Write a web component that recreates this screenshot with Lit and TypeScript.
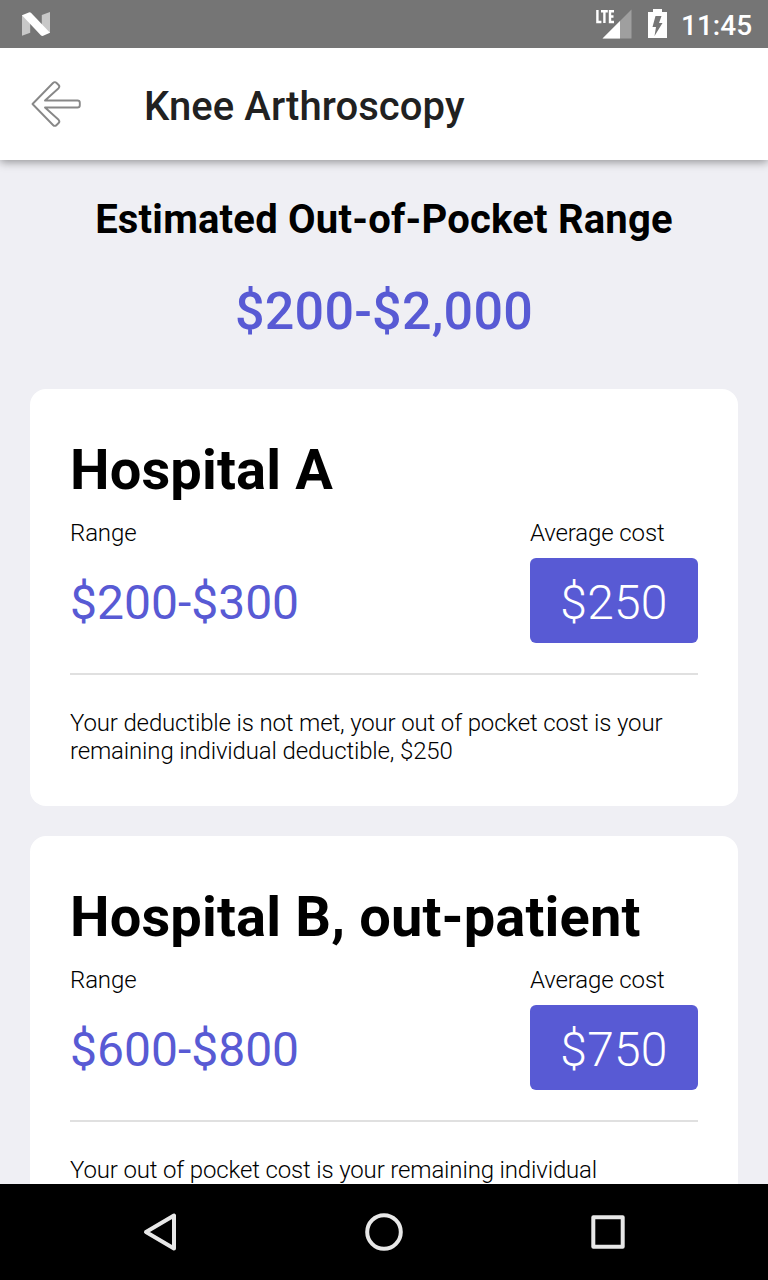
import { LitElement, html, css } from "lit";
import { customElement, property } from "lit/decorators.js";

interface Estimate {
  name: string;
  range: string;
  average: string;
  note: string;
}

const estimates: Estimate[] = [
  {
    name: "Hospital A",
    range: "$200-$300",
    average: "$250",
    note: "Your deductible is not met, your out of pocket cost is your remaining individual deductible, $250",
  },
  {
    name: "Hospital B, out-patient",
    range: "$600-$800",
    average: "$750",
    note: "Your out of pocket cost is your remaining individual",
  },
];

@customElement("status-bar")
export class StatusBar extends LitElement {
  static styles = css`
    :host {
      display: flex;
      align-items: center;
      height: 48px;
      flex: none;
      background: #757575;
      color: #fff;
      position: relative;
      z-index: 2;
    }
    svg { display: block; flex: none; }
    .clock {
      width: 95px;
      padding-left: 8px;
      box-sizing: border-box;
      font: 500 28px/48px Roboto, sans-serif;
      padding-top: 3px;
      white-space: nowrap;
    }
    .spacer { flex: 1; }
  `;
  render() {
    return html`
      <svg width="72" height="48" viewBox="0 0 72 48">
        <path d="M22 15h8.200v17.800l-8.200 3z" fill="#c8c8c8" />
        <path d="M41.800 15l8.200-3v21h-8.200z" fill="#c8c8c8" />
        <path d="M22 15.200l6.800-2.800q1.400-.4 2.400.5L50 32.800l-6.800 3q-1.400.4-2.400-.5z" fill="#fff" />
      </svg>
      <span class="spacer"></span>
      <svg width="87" height="48" viewBox="586 0 87 48">
        <path d="M631.500 9.500v29h-29z" fill="#9f9f9f" />
        <path d="M620 21v17.500h-17.500z" fill="#fff" />
        <path d="M597.400 10v12h4M601 11.200h6.800M604.400 11v12M614 11.200h-4v10.800h4M610 16.500h3.500" fill="none" stroke="#fff" stroke-width="2.400" />
        <path d="M653 9h9v3h5v26h-19V12h5z" fill="#fff" />
        <path d="M655.500 16h6l-2.500 7h3.500l-8 13 1.500-9h-3.500z" fill="#757575" />
      </svg>
      <span class="clock">11:45</span>
    `;
  }
}

@customElement("estimate-card")
export class EstimateCard extends LitElement {
  @property({ attribute: false }) estimate!: Estimate;
  static styles = css`
    :host {
      display: block;
      flex: none;
      box-sizing: border-box;
      height: 417px;
      padding: 48px 40px 0;
      border-radius: 16px;
      background: #fff;
      color: #000;
      font-family: Roboto, sans-serif;
    }
    h2 { margin: 0; font-size: 56px; line-height: 66px; font-weight: 700; letter-spacing: 0.15px; white-space: nowrap; }
    .costs { display: flex; justify-content: space-between; margin-top: 16px; }
    .label { font-size: 24px; line-height: 28px; font-weight: 300; letter-spacing: -0.12px; }
    .range { margin-top: 28px; font-size: 48px; line-height: 56px; color: #585ad4; }
    .average { width: 168px; }
    .badge {
      margin-top: 11px;
      height: 85px;
      line-height: 90px;
      border-radius: 6px;
      background: #585ad4;
      color: #fff;
      font-size: 48px;
      font-weight: 300;
      letter-spacing: 0.2px;
      text-align: center;
    }
    .note {
      margin: 30px 0 0;
      padding-top: 34px;
      border-top: 2px solid #e0e0e0;
      font-size: 24px;
      line-height: 28px;
      font-weight: 300;
      letter-spacing: -0.15px;
    }
  `;
  render() {
    const e = this.estimate;
    return html`
      <h2>${e.name}</h2>
      <div class="costs">
        <div>
          <div class="label">Range</div>
          <div class="range">${e.range}</div>
        </div>
        <div class="average">
          <div class="label">Average cost</div>
          <div class="badge">${e.average}</div>
        </div>
      </div>
      <p class="note">${e.note}</p>
    `;
  }
}

@customElement("app-root")
export class AppRoot extends LitElement {
  static styles = css`
    :host {
      display: flex;
      flex-direction: column;
      height: 1280px;
      width: 768px;
      overflow: hidden;
      background: #efeff4;
      font-family: Roboto, sans-serif;
    }
    svg { display: block; flex: none; }
    header {
      display: flex;
      align-items: center;
      height: 112px;
      flex: none;
      background: #fff;
      box-shadow: 0 2px 9px rgba(0, 0, 0, 0.4);
      z-index: 1;
    }
    h1 { margin: 6px 0 0; font-size: 40px; line-height: 48px; font-weight: 500; letter-spacing: 0.06px; color: #212121; }
    main {
      display: flex;
      flex-direction: column;
      flex: 1;
      min-height: 0;
      overflow: hidden;
      padding: 0 30px;
    }
    .title {
      margin: 36px 0 0;
      font-size: 40px;
      line-height: 47px;
      font-weight: 700;
      letter-spacing: 0.21px;
      text-align: center;
      flex: none;
    }
    .total {
      margin: 37px 0 45px;
      font-size: 52px;
      line-height: 64px;
      font-weight: 500;
      letter-spacing: 0.25px;
      color: #585ad4;
      text-align: center;
      flex: none;
    }
    .cards { display: flex; flex-direction: column; gap: 30px; flex: none; }
    nav { flex: none; height: 96px; background: #000; }
  `;
  render() {
    return html`
      <status-bar></status-bar>
      <header>
        <svg width="144" height="112" viewBox="0 48 144 112" fill="none" stroke="#888" stroke-width="1.900" stroke-linejoin="round">
          <path d="M32.500 104L53 83q1.800-1.800 3.600 0l2 2q1.500 1.500 0 3.200L45 100.500H77.500q2.300 0 2.300 2.300v2.400q0 2.300-2.300 2.300H45L58.600 119.800q1.500 1.700 0 3.200l-2 2q-1.800 1.800-3.600 0z" />
        </svg>
        <h1>Knee Arthroscopy</h1>
      </header>
      <main>
        <h2 class="title">Estimated Out-of-Pocket Range</h2>
        <div class="total">$200-$2,000</div>
        <div class="cards">
          ${estimates.map((e) => html`<estimate-card .estimate=${e}></estimate-card>`)}
        </div>
      </main>
      <nav>
        <svg width="768" height="96" viewBox="0 1184 768 96" fill="none" stroke="#e8e8e8" stroke-width="4" stroke-linejoin="round">
          <path d="M174 1215.500v33l-28-16.500z" />
          <circle cx="384" cy="1232" r="16.800" />
          <rect x="593.300" y="1217.300" width="29.400" height="29.400" />
        </svg>
      </nav>
    `;
  }
}
